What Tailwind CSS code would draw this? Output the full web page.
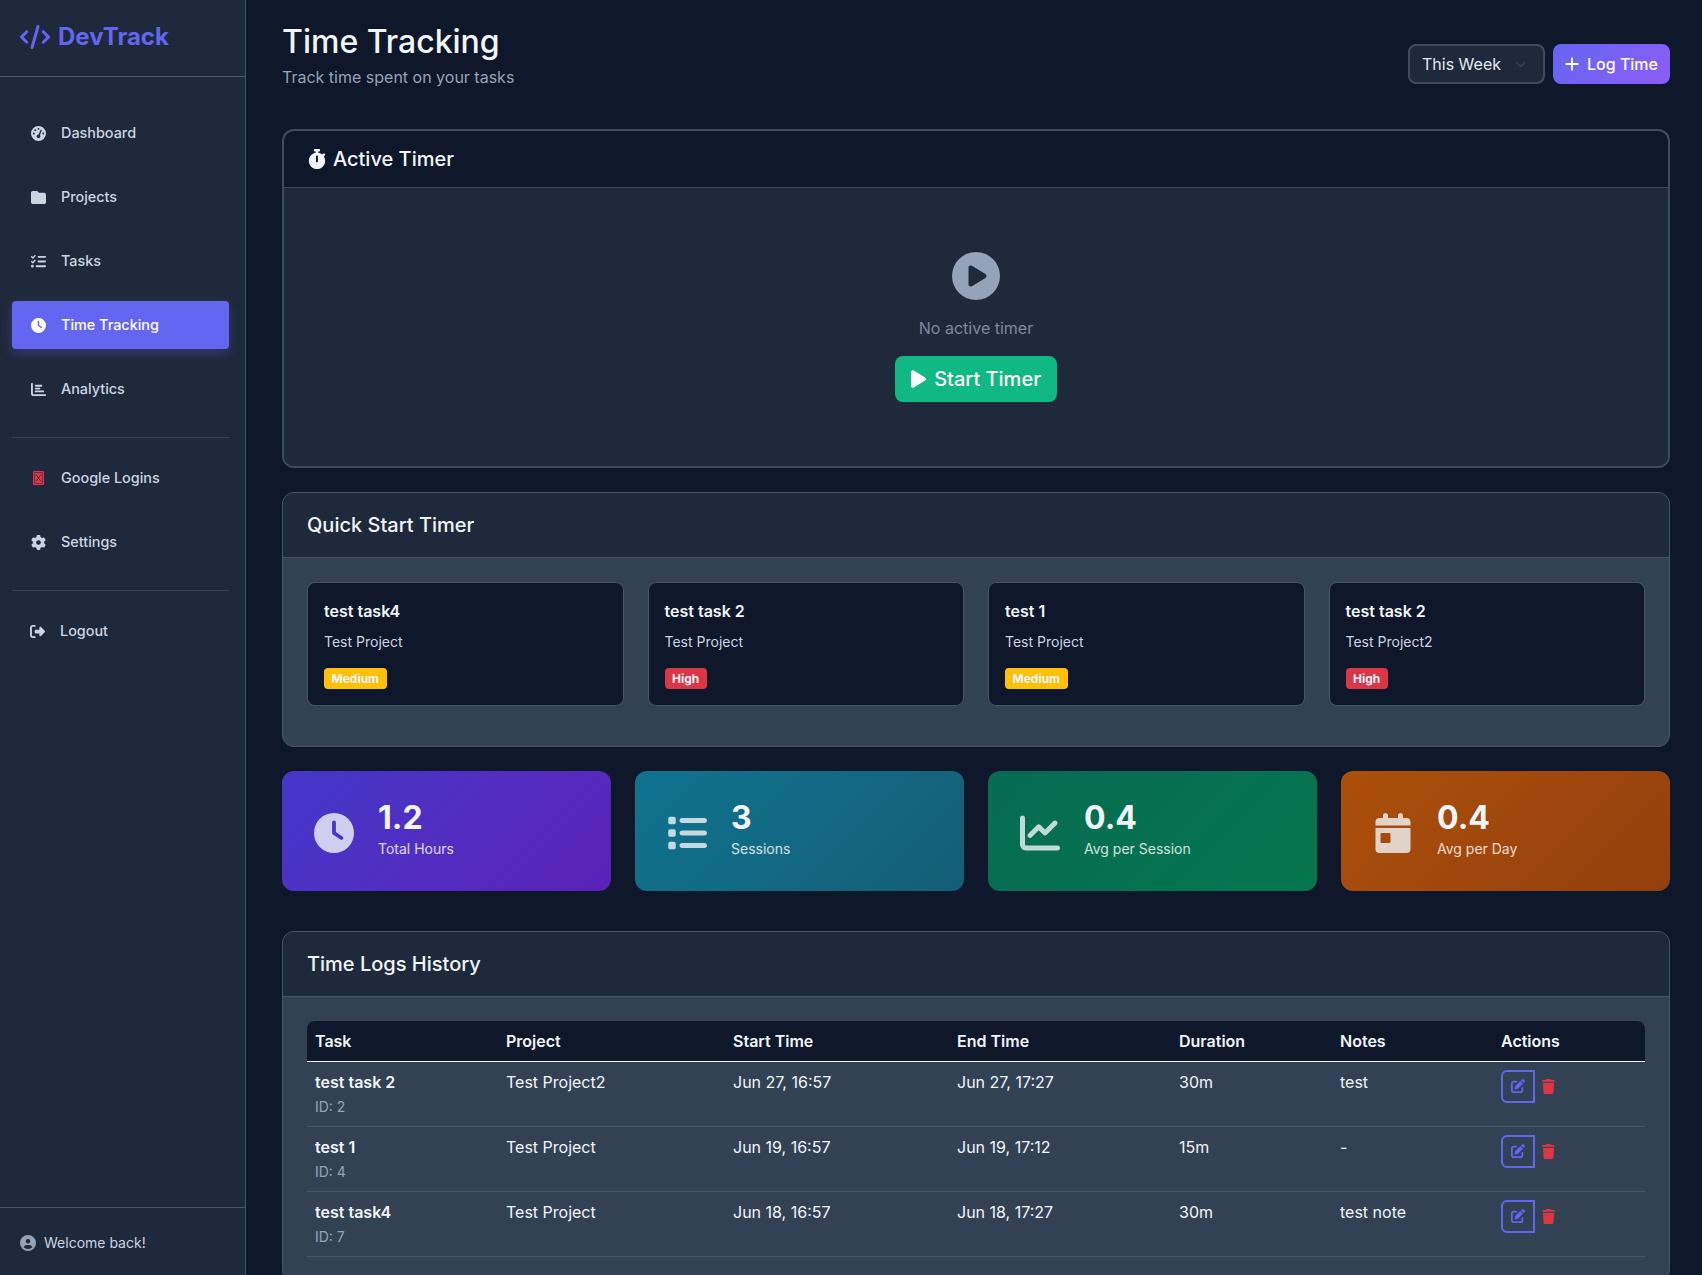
<!DOCTYPE html>
<html lang="en">
  <head>
    <meta charset="UTF-8" />
    <meta name="viewport" content="width=device-width, initial-scale=1.0" />
    <title>Time Tracking - DevTrack</title>
    <script src="https://cdn.jsdelivr.net/npm/@tailwindcss/browser@4"></script>
  </head>

  <body class="h-screen overflow-hidden flex bg-[#0f172a] text-[#f1f5f9] [font-family:Inter,sans-serif]">
    <svg class="hidden">
      <symbol id="i-edit" viewBox="0 0 512 512"><path fill="currentColor" d="M471.6 21.7c-21.9-21.9-57.3-21.9-79.2 0L362.3 51.7l97.9 97.9 30.1-30.1c21.9-21.9 21.9-57.3 0-79.2L471.6 21.7zm-299.2 220c-6.1 6.1-10.8 13.6-13.5 21.9l-29.6 88.8c-2.9 8.6-.6 18.1 5.8 24.6s15.9 8.7 24.6 5.8l88.8-29.6c8.2-2.7 15.7-7.4 21.9-13.5L437.7 172.3 339.7 74.3 172.4 241.7zM96 64C43 64 0 107 0 160V416c0 53 43 96 96 96H352c53 0 96-43 96-96V320c0-17.7-14.3-32-32-32s-32 14.3-32 32v96c0 17.7-14.3 32-32 32H96c-17.7 0-32-14.3-32-32V160c0-17.7 14.3-32 32-32h96c17.7 0 32-14.3 32-32s-14.3-32-32-32H96z"/></symbol>
      <symbol id="i-trash" viewBox="0 0 448 512"><path fill="currentColor" d="M135.2 17.7L128 32H32C14.3 32 0 46.3 0 64S14.3 96 32 96H416c17.7 0 32-14.3 32-32s-14.3-32-32-32H320l-7.2-14.3C307.4 6.8 296.3 0 284.2 0H163.8c-12.1 0-23.2 6.8-28.6 17.7zM416 128H32L53.2 467c1.6 25.3 22.6 45 47.9 45H346.9c25.3 0 46.3-19.7 47.9-45L416 128z"/></symbol>
      <symbol id="i-play" viewBox="0 0 384 512"><path fill="currentColor" d="M73 39c-14.8-9.1-33.4-9.4-48.5-.9S0 62.6 0 80V432c0 17.4 9.4 33.4 24.5 41.9s33.7 8.1 48.5-.9L361 297c14.3-8.7 23-24.2 23-41s-8.7-32.2-23-41L73 39z"/></symbol>
      <symbol id="i-clock" viewBox="0 0 512 512"><path fill="currentColor" d="M256 0a256 256 0 1 1 0 512A256 256 0 1 1 256 0zM232 120V256c0 8 4 15.5 10.7 20l96 64c11 7.4 25.9 4.4 33.3-6.7s4.4-25.9-6.7-33.3L280 243.2V120c0-13.3-10.7-24-24-24s-24 10.7-24 24z"/></symbol>
    </svg>

    <!-- Sidebar -->
    <aside class="w-[246px] shrink-0 h-full flex flex-col bg-[#1e293b] border-r border-[#475569]">
      <div class="h-[77px] shrink-0 flex items-center gap-2 px-5 pb-0.5 border-b border-[#475569] text-[#6366f1]">
        <svg class="w-[30px] h-6" viewBox="0 0 640 512"><path fill="currentColor" d="M392.8 1.2c-17-4.9-34.7 5-39.6 22l-128 448c-4.9 17 5 34.7 22 39.6s34.7-5 39.6-22l128-448c4.9-17-5-34.7-22-39.6zm80.6 120.1c-12.5 12.5-12.5 32.8 0 45.3L562.7 256l-89.4 89.4c-12.5 12.5-12.5 32.8 0 45.3s32.8 12.5 45.3 0l112-112c12.5-12.5 12.5-32.8 0-45.3l-112-112c-12.5-12.5-32.8-12.5-45.3 0zm-306.7 0c-12.5-12.5-32.8-12.5-45.3 0l-112 112c-12.5 12.5-12.5 32.8 0 45.3l112 112c12.5 12.5 32.8 12.5 45.3 0s12.5-32.8 0-45.3L77.3 256l89.4-89.4c12.5-12.5 12.5-32.8 0-45.3z"/></svg>
        <span class="text-2xl font-bold leading-none">DevTrack</span>
      </div>

      <nav class="flex-1 pl-3 pr-4 pt-8 text-[14.4px] font-medium text-[#cbd5e1]">
        <a class="h-12 flex items-center gap-[15px] pl-[19px] mb-4 rounded">
          <svg class="w-[15px] h-[15px] shrink-0" viewBox="0 0 512 512"><path fill="currentColor" d="M0 256a256 256 0 1 1 512 0A256 256 0 1 1 0 256zM288 96a32 32 0 1 0 -64 0 32 32 0 1 0 64 0zM256 416c35.3 0 64-28.7 64-64c0-17.4-6.9-33.1-18.1-44.6L366 161.7c5.3-12.1-.2-26.3-12.3-31.6s-26.3 .2-31.6 12.3L257.9 288c-.6 0-1.3 0-1.9 0c-35.3 0-64 28.7-64 64s28.7 64 64 64zM176 144a32 32 0 1 0 -64 0 32 32 0 1 0 64 0zM96 288a32 32 0 1 0 0-64 32 32 0 1 0 0 64zm352-32a32 32 0 1 0 -64 0 32 32 0 1 0 64 0z"/></svg>
          Dashboard
        </a>
        <a class="h-12 flex items-center gap-[15px] pl-[19px] mb-4 rounded">
          <svg class="w-[15px] h-[15px] shrink-0" viewBox="0 0 512 512"><path fill="currentColor" d="M64 480H448c35.3 0 64-28.7 64-64V160c0-35.3-28.7-64-64-64H288c-10.1 0-19.6-4.7-25.6-12.8L243.2 57.6C231.1 41.5 212.1 32 192 32H64C28.7 32 0 60.7 0 96V416c0 35.3 28.7 64 64 64z"/></svg>
          Projects
        </a>
        <a class="h-12 flex items-center gap-[15px] pl-[19px] mb-4 rounded">
          <svg class="w-[15px] h-[15px] shrink-0" viewBox="0 0 512 512"><path fill="currentColor" d="M152.1 38.2c9.9 8.9 10.7 24 1.8 33.9l-72 80c-4.4 4.9-10.6 7.8-17.2 7.9s-12.9-2.4-17.6-7L7 113C-2.3 103.6-2.3 88.4 7 79s24.6-9.4 33.9 0l22.1 22.1 55.1-61.2c8.9-9.9 24-10.7 33.9-1.8zm0 160c9.9 8.9 10.7 24 1.8 33.9l-72 80c-4.4 4.9-10.6 7.8-17.2 7.9s-12.9-2.4-17.6-7L7 273c-9.4-9.4-9.4-24.6 0-33.9s24.6-9.4 33.9 0l22.1 22.1 55.1-61.2c8.9-9.9 24-10.7 33.9-1.8zM224 96c0-17.7 14.3-32 32-32H480c17.7 0 32 14.3 32 32s-14.3 32-32 32H256c-17.7 0-32-14.3-32-32zm0 160c0-17.7 14.3-32 32-32H480c17.7 0 32 14.3 32 32s-14.3 32-32 32H256c-17.7 0-32-14.3-32-32zM160 416c0-17.7 14.3-32 32-32H480c17.7 0 32 14.3 32 32s-14.3 32-32 32H192c-17.7 0-32-14.3-32-32zM48 368a48 48 0 1 1 0 96 48 48 0 1 1 0-96z"/></svg>
          Tasks
        </a>
        <a class="h-12 flex items-center gap-[15px] pl-[19px] mb-4 rounded bg-[#6366f1] text-white shadow-[0_4px_12px_rgba(99,102,241,0.3)]">
          <svg class="w-[15px] h-[15px] shrink-0"><use href="#i-clock" /></svg>
          Time Tracking
        </a>
        <a class="h-12 flex items-center gap-[15px] pl-[19px] mb-4 rounded">
          <svg class="w-[15px] h-[15px] shrink-0" viewBox="0 0 512 512"><path fill="currentColor" d="M32 32c17.7 0 32 14.3 32 32V400c0 8.8 7.2 16 16 16H480c17.7 0 32 14.3 32 32s-14.3 32-32 32H80c-44.2 0-80-35.8-80-80V64C0 46.3 14.3 32 32 32zm96 96c0-17.7 14.3-32 32-32l192 0c17.7 0 32 14.3 32 32s-14.3 32-32 32l-192 0c-17.7 0-32-14.3-32-32zm32 64H288c17.7 0 32 14.3 32 32s-14.3 32-32 32H160c-17.7 0-32-14.3-32-32s14.3-32 32-32zm0 96H416c17.7 0 32 14.3 32 32s-14.3 32-32 32H160c-17.7 0-32-14.3-32-32s14.3-32 32-32z"/></svg>
          Analytics
        </a>

        <hr class="border-[#334155] mt-6 mb-4" />

        <a class="h-12 flex items-center gap-[15px] pl-[19px] mb-4 rounded">
          <!-- tofu box, the brand font never loaded -->
          <svg class="w-[15px] h-4 shrink-0" viewBox="0 0 15 16"><rect x="2" y="1" width="11" height="14" rx="1" fill="#e5344a"/><path d="M3.5 2.5h8v11h-8z" fill="none" stroke="#1e293b" stroke-width="0.6"/><path d="M5 4.5l5 7M10 4.5l-5 7" stroke="#1e293b" stroke-width="0.8"/></svg>
          Google Logins
        </a>
        <a class="h-12 flex items-center gap-[15px] pl-[19px] mb-4 rounded">
          <svg class="w-[15px] h-[15px] shrink-0" viewBox="0 0 512 512"><path fill="currentColor" d="M495.9 166.6c3.2 8.7 .5 18.4-6.4 24.6l-43.3 39.4c1.1 8.3 1.7 16.8 1.7 25.4s-.6 17.1-1.7 25.4l43.3 39.4c6.9 6.2 9.6 15.9 6.4 24.6c-4.4 11.9-9.7 23.3-15.8 34.3l-4.7 8.1c-6.6 11-14 21.4-22.1 31.2c-5.9 7.2-15.7 9.6-24.5 6.8l-55.7-17.7c-13.4 10.3-28.2 18.9-44 25.4l-12.5 57.1c-2 9.1-9 16.3-18.2 17.8c-13.8 2.3-28 3.5-42.5 3.5s-28.7-1.2-42.5-3.5c-9.2-1.5-16.2-8.7-18.2-17.8l-12.5-57.1c-15.8-6.5-30.6-15.1-44-25.4L83.1 425.9c-8.8 2.8-18.6 .3-24.5-6.8c-8.1-9.8-15.5-20.2-22.1-31.2l-4.7-8.1c-6.1-11-11.4-22.4-15.8-34.3c-3.2-8.7-.5-18.4 6.4-24.6l43.3-39.4C64.6 273.1 64 264.6 64 256s.6-17.1 1.7-25.4L22.4 191.2c-6.9-6.2-9.6-15.9-6.4-24.6c4.4-11.9 9.7-23.3 15.8-34.3l4.7-8.1c6.6-11 14-21.4 22.1-31.2c5.9-7.2 15.7-9.6 24.5-6.8l55.7 17.7c13.4-10.3 28.2-18.9 44-25.4l12.5-57.1c2-9.1 9-16.3 18.2-17.8C227.3 1.2 241.5 0 256 0s28.7 1.2 42.5 3.5c9.2 1.5 16.2 8.7 18.2 17.8l12.5 57.1c15.8 6.5 30.6 15.1 44 25.4l55.7-17.7c8.8-2.8 18.6-.3 24.5 6.8c8.1 9.8 15.5 20.2 22.1 31.2l4.7 8.1c6.1 11 11.4 22.4 15.8 34.3zM256 336a80 80 0 1 0 0-160 80 80 0 1 0 0 160z"/></svg>
          Settings
        </a>

        <hr class="border-[#334155] mt-6 mb-4" />

        <a class="h-12 flex items-center gap-[15px] pl-[18px] rounded">
          <svg class="w-[15px] h-[15px] shrink-0" viewBox="0 0 512 512"><path fill="currentColor" d="M377.9 105.9L500.7 228.7c7.2 7.2 11.3 17.1 11.3 27.3s-4.1 20.1-11.3 27.3L377.9 406.1c-6.4 6.4-15 9.9-24 9.9c-18.7 0-33.9-15.2-33.9-33.9l0-62.1-128 0c-17.7 0-32-14.3-32-32l0-64c0-17.7 14.3-32 32-32l128 0 0-62.1c0-18.7 15.2-33.9 33.9-33.9c9 0 17.6 3.6 24 9.9zM160 96L96 96c-17.7 0-32 14.3-32 32l0 256c0 17.7 14.3 32 32 32l64 0c17.7 0 32 14.3 32 32s-14.3 32-32 32l-64 0c-53 0-96-43-96-96L0 128C0 75 43 32 96 32l64 0c17.7 0 32 14.3 32 32s-14.3 32-32 32z"/></svg>
          Logout
        </a>
      </nav>

      <div class="h-[68px] shrink-0 flex items-center gap-2 px-5 pt-0.5 border-t border-[#475569] text-[14px] text-[#cbd5e1]">
        <svg class="w-4 h-4 text-[#94a3b8]" viewBox="0 0 512 512"><path fill="currentColor" d="M399 384.2C376.9 345.8 335.4 320 288 320H224c-47.4 0-88.9 25.8-111 64.2c35.2 39.2 86.2 63.8 143 63.8s107.8-24.7 143-63.8zM0 256a256 256 0 1 1 512 0A256 256 0 1 1 0 256zm256 16a72 72 0 1 0 0-144 72 72 0 1 0 0 144z"/></svg>
        Welcome back!
      </div>
    </aside>

    <!-- Main content -->
    <main class="flex-1 min-w-0 h-full overflow-hidden pl-9 pr-8 pt-6">
      <header class="h-[105px] flex justify-between">
        <div>
          <h1 class="text-[32px] font-medium leading-[36px]">Time Tracking</h1>
          <p class="mt-[5px] text-base text-[#94a3b8]">Track time spent on your tasks</p>
        </div>
        <div class="flex gap-2 mt-5 h-10">
          <div class="w-[137px] h-10 flex items-center justify-between pl-3 pr-[17px] bg-[#1e293b] border-2 border-[#3f4c5e] rounded-lg text-base text-[#e2e8f0]">
            This Week
            <svg class="w-[11px] h-[7px] text-[#334155]" viewBox="0 0 11 7"><path d="M1 1l4.5 4.5L10 1" fill="none" stroke="currentColor" stroke-width="1.5"/></svg>
          </div>
          <button class="w-[117px] h-10 flex items-center justify-center gap-2 rounded-lg bg-linear-135 from-[#6366f1] to-[#8b5cf6] text-base font-medium text-white">
            <svg class="w-[14px] h-[14px]" viewBox="0 0 14 14"><path d="M7 0.5v13M0.5 7h13" stroke="currentColor" stroke-width="1.8"/></svg>
            Log Time
          </button>
        </div>
      </header>

      <!-- Active timer -->
      <section class="mb-6 border-2 border-[#3f4c5e] rounded-xl overflow-hidden">
        <div class="h-[57px] flex items-center gap-[7px] px-6 border-b border-[#3f4c5e]">
          <svg class="w-[18px] h-5" viewBox="0 0 448 512"><path fill="currentColor" d="M176 0c-17.7 0-32 14.3-32 32s14.3 32 32 32h16V98.4C92.3 113.8 16 200 16 304c0 114.9 93.1 208 208 208s208-93.1 208-208c0-41.8-12.3-80.7-33.5-113.2l24.1-24.1c12.5-12.5 12.5-32.8 0-45.3s-32.8-12.5-45.3 0L355.7 143c-28.1-23-62.2-38.8-99.7-44.6V64h16c17.7 0 32-14.3 32-32s-14.3-32-32-32H224 176zm72 192V320c0 13.3-10.7 24-24 24s-24-10.7-24-24V192c0-13.3 10.7-24 24-24s24 10.7 24 24z"/></svg>
          <h2 class="text-xl font-medium">Active Timer</h2>
        </div>
        <div class="py-16 bg-[#1e293b] flex flex-col items-center">
          <svg class="w-12 h-12 text-[#94a3b8] mb-3" viewBox="0 0 512 512"><path fill="currentColor" d="M0 256a256 256 0 1 1 512 0A256 256 0 1 1 0 256zM188.3 147.1c-7.6 4.2-12.3 12.3-12.3 20.9V344c0 8.7 4.7 16.7 12.3 20.9s16.8 4.1 24.3-.5l144-88c7.1-4.4 11.5-12.1 11.5-20.5s-4.4-16.1-11.5-20.5l-144-88c-7.4-4.5-16.7-4.7-24.3-.5z"/></svg>
          <p class="mt-1 mb-4 text-base text-[#7c899c]">No active timer</p>
          <button class="w-[162px] h-[46px] flex items-center justify-center gap-2 pl-0.5 rounded-lg bg-[#10b981] text-xl font-medium text-white">
            <svg class="w-[15px] h-5 -ml-0.5"><use href="#i-play" /></svg>
            Start Timer
          </button>
        </div>
      </section>

      <!-- Quick start -->
      <section class="mb-6 border border-[#475569] rounded-xl overflow-hidden bg-[#334155]">
        <div class="h-[65px] flex items-center px-6 bg-[#1e293b] border-b border-[#475569]">
          <h2 class="text-xl font-medium">Quick Start Timer</h2>
        </div>
        <div class="p-6 pb-10 grid grid-cols-4 gap-6">
          <div class="h-[124px] p-4 bg-[#0f172a] border border-[#475569] rounded-lg">
            <h3 class="text-base font-semibold leading-6">test task4</h3>
            <p class="mt-2 text-sm leading-[21px] text-[#cbd5e1]">Test Project</p>
            <span class="inline-block mt-4 px-[7.5px] h-[21px] leading-[21px] rounded bg-[#ffc107] text-xs font-bold">Medium</span>
          </div>
          <div class="h-[124px] p-4 bg-[#0f172a] border border-[#475569] rounded-lg">
            <h3 class="text-base font-semibold leading-6">test task 2</h3>
            <p class="mt-2 text-sm leading-[21px] text-[#cbd5e1]">Test Project</p>
            <span class="inline-block mt-4 px-[7.5px] h-[21px] leading-[21px] rounded bg-[#dc3545] text-xs font-bold">High</span>
          </div>
          <div class="h-[124px] p-4 bg-[#0f172a] border border-[#475569] rounded-lg">
            <h3 class="text-base font-semibold leading-6">test 1</h3>
            <p class="mt-2 text-sm leading-[21px] text-[#cbd5e1]">Test Project</p>
            <span class="inline-block mt-4 px-[7.5px] h-[21px] leading-[21px] rounded bg-[#ffc107] text-xs font-bold">Medium</span>
          </div>
          <div class="h-[124px] p-4 bg-[#0f172a] border border-[#475569] rounded-lg">
            <h3 class="text-base font-semibold leading-6">test task 2</h3>
            <p class="mt-2 text-sm leading-[21px] text-[#cbd5e1]">Test Project2</p>
            <span class="inline-block mt-4 px-[7.5px] h-[21px] leading-[21px] rounded bg-[#dc3545] text-xs font-bold">High</span>
          </div>
        </div>
      </section>

      <!-- Stats -->
      <section class="grid grid-cols-4 gap-6 mb-10">
        <div class="h-[120px] flex items-center gap-6 px-8 rounded-xl bg-linear-135 from-[#4338ca] to-[#5b21b6]">
          <svg class="w-10 h-10 mt-1 opacity-80"><use href="#i-clock" /></svg>
          <div class="pb-1">
            <p class="text-[32px] font-bold leading-[38px]">1.2</p>
            <p class="mt-0.5 text-sm text-white/80">Total Hours</p>
          </div>
        </div>
        <div class="h-[120px] flex items-center gap-6 px-8 rounded-xl bg-linear-135 from-[#0e7490] to-[#155e75]">
          <svg class="w-10 h-10 mt-1 opacity-80" viewBox="0 0 512 512"><path fill="currentColor" d="M40 48C26.7 48 16 58.7 16 72v48c0 13.3 10.7 24 24 24H88c13.3 0 24-10.7 24-24V72c0-13.3-10.7-24-24-24H40zM192 64c-17.7 0-32 14.3-32 32s14.3 32 32 32H480c17.7 0 32-14.3 32-32s-14.3-32-32-32H192zm0 160c-17.7 0-32 14.3-32 32s14.3 32 32 32H480c17.7 0 32-14.3 32-32s-14.3-32-32-32H192zm0 160c-17.7 0-32 14.3-32 32s14.3 32 32 32H480c17.7 0 32-14.3 32-32s-14.3-32-32-32H192zM16 232v48c0 13.3 10.7 24 24 24H88c13.3 0 24-10.7 24-24V232c0-13.3-10.7-24-24-24H40c-13.3 0-24 10.7-24 24zM40 368c-13.3 0-24 10.7-24 24v48c0 13.3 10.7 24 24 24H88c13.3 0 24-10.7 24-24V392c0-13.3-10.7-24-24-24H40z"/></svg>
          <div class="pb-1">
            <p class="text-[32px] font-bold leading-[38px]">3</p>
            <p class="mt-0.5 text-sm text-white/80">Sessions</p>
          </div>
        </div>
        <div class="h-[120px] flex items-center gap-6 px-8 rounded-xl bg-linear-135 from-[#066c52] to-[#05764e]">
          <svg class="w-10 h-10 mt-1 opacity-80" viewBox="0 0 512 512"><path fill="currentColor" d="M64 64c0-17.7-14.3-32-32-32S0 46.3 0 64V400c0 44.2 35.8 80 80 80H480c17.7 0 32-14.3 32-32s-14.3-32-32-32H80c-8.8 0-16-7.2-16-16V64zm406.6 86.6c12.5-12.5 12.5-32.8 0-45.3s-32.8-12.5-45.3 0L320 210.7l-57.4-57.4c-12.5-12.5-32.8-12.5-45.3 0l-112 112c-12.5 12.5-12.5 32.8 0 45.3s32.8 12.5 45.3 0L240 221.3l57.4 57.4c12.5 12.5 32.8 12.5 45.3 0l128-128z"/></svg>
          <div class="pb-1">
            <p class="text-[32px] font-bold leading-[38px]">0.4</p>
            <p class="mt-0.5 text-sm text-white/80">Avg per Session</p>
          </div>
        </div>
        <div class="h-[120px] flex items-center gap-6 px-8 rounded-xl bg-linear-135 from-[#ad4f0a] to-[#92400e]">
          <svg class="w-10 h-10 mt-1 opacity-80" viewBox="0 0 448 512"><path fill="currentColor" d="M128 0c17.7 0 32 14.3 32 32V64H288V32c0-17.7 14.3-32 32-32s32 14.3 32 32V64h48c26.5 0 48 21.5 48 48v48H0V112C0 85.5 21.5 64 48 64H96V32c0-17.7 14.3-32 32-32zM0 192H448V464c0 26.5-21.5 48-48 48H48c-26.5 0-48-21.5-48-48V192zm80 64c-8.8 0-16 7.2-16 16v96c0 8.8 7.2 16 16 16h96c8.8 0 16-7.2 16-16V272c0-8.8-7.2-16-16-16H80z"/></svg>
          <div class="pb-1">
            <p class="text-[32px] font-bold leading-[38px]">0.4</p>
            <p class="mt-0.5 text-sm text-white/80">Avg per Day</p>
          </div>
        </div>
      </section>

      <!-- Time logs -->
      <section class="border border-[#475569] rounded-xl overflow-hidden bg-[#334155]">
        <div class="h-[65px] flex items-center px-6 bg-[#1e293b] border-b border-[#475569]">
          <h2 class="text-xl font-medium">Time Logs History</h2>
        </div>
        <div class="p-6">
          <table class="w-full table-fixed text-left text-base">
            <colgroup>
              <col class="w-[191px]" /><col class="w-[227px]" /><col class="w-[224px]" /><col class="w-[222px]" /><col class="w-[161px]" /><col class="w-[161px]" /><col />
            </colgroup>
            <thead>
              <tr class="h-10 bg-[#0f172a] border-b border-[#f1f5f9]">
                <th class="px-2 font-semibold rounded-tl-lg">Task</th>
                <th class="px-2 font-semibold">Project</th>
                <th class="px-2 font-semibold">Start Time</th>
                <th class="px-2 font-semibold">End Time</th>
                <th class="px-2 font-semibold">Duration</th>
                <th class="px-2 font-semibold">Notes</th>
                <th class="px-2 font-semibold rounded-tr-lg">Actions</th>
              </tr>
            </thead>
            <tbody>
              <tr class="h-[65px] border-b border-[#475569] align-top">
                <td class="px-2 pt-2">
                  <p class="font-semibold leading-6">test task 2</p>
                  <p class="mt-px text-sm leading-[24px] text-[#94a3b8]">ID: 2</p>
                </td>
                <td class="px-2 pt-2">Test Project2</td>
                <td class="px-2 pt-2">Jun 27, 16:57</td>
                <td class="px-2 pt-2">Jun 27, 17:27</td>
                <td class="px-2 pt-2">30m</td>
                <td class="px-2 pt-2">test</td>
                <td class="px-2 pt-2">
                  <div class="flex items-center gap-[7px]">
                    <button class="w-[34px] h-[33px] flex items-center justify-center border-2 border-[#6366f1] rounded-l-md text-[#6366f1]"><svg class="w-[14px] h-[14px]"><use href="#i-edit" /></svg></button>
                    <svg class="w-[13px] h-[15px] text-[#dc3545]"><use href="#i-trash" /></svg>
                  </div>
                </td>
              </tr>
              <tr class="h-[65px] border-b border-[#475569] align-top">
                <td class="px-2 pt-2">
                  <p class="font-semibold leading-6">test 1</p>
                  <p class="mt-px text-sm leading-[24px] text-[#94a3b8]">ID: 4</p>
                </td>
                <td class="px-2 pt-2">Test Project</td>
                <td class="px-2 pt-2">Jun 19, 16:57</td>
                <td class="px-2 pt-2">Jun 19, 17:12</td>
                <td class="px-2 pt-2">15m</td>
                <td class="px-2 pt-2">-</td>
                <td class="px-2 pt-2">
                  <div class="flex items-center gap-[7px]">
                    <button class="w-[34px] h-[33px] flex items-center justify-center border-2 border-[#6366f1] rounded-l-md text-[#6366f1]"><svg class="w-[14px] h-[14px]"><use href="#i-edit" /></svg></button>
                    <svg class="w-[13px] h-[15px] text-[#dc3545]"><use href="#i-trash" /></svg>
                  </div>
                </td>
              </tr>
              <tr class="h-[65px] border-b border-[#475569] align-top">
                <td class="px-2 pt-2">
                  <p class="font-semibold leading-6">test task4</p>
                  <p class="mt-px text-sm leading-[24px] text-[#94a3b8]">ID: 7</p>
                </td>
                <td class="px-2 pt-2">Test Project</td>
                <td class="px-2 pt-2">Jun 18, 16:57</td>
                <td class="px-2 pt-2">Jun 18, 17:27</td>
                <td class="px-2 pt-2">30m</td>
                <td class="px-2 pt-2">test note</td>
                <td class="px-2 pt-2">
                  <div class="flex items-center gap-[7px]">
                    <button class="w-[34px] h-[33px] flex items-center justify-center border-2 border-[#6366f1] rounded-l-md text-[#6366f1]"><svg class="w-[14px] h-[14px]"><use href="#i-edit" /></svg></button>
                    <svg class="w-[13px] h-[15px] text-[#dc3545]"><use href="#i-trash" /></svg>
                  </div>
                </td>
              </tr>
            </tbody>
          </table>
        </div>
      </section>
    </main>
  </body>
</html>
